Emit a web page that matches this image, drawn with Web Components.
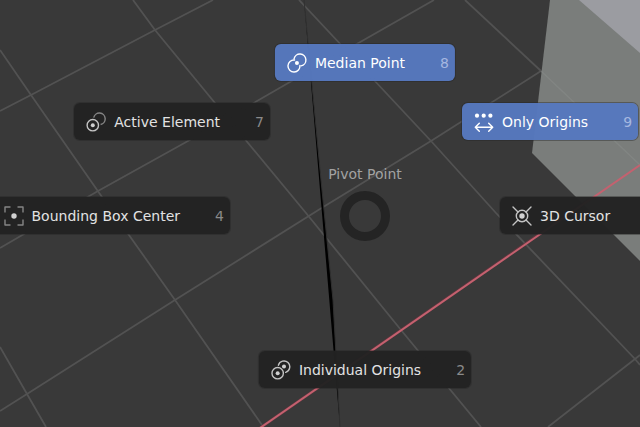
<!DOCTYPE html>
<html lang="en">
<head>
<meta charset="utf-8">
<title>Pivot Point</title>
<style>
html, body {
  margin: 0;
  height: 100%;
  overflow: hidden;
  background: #393939;
}
body { font: 14px/20px "DejaVu Sans", sans-serif; }
</style>
</head>
<body>
<view-port>
  <pie-menu heading="Pivot Point">
    <pie-item slot="w" icon="bounds" key="4">Bounding Box Center</pie-item>
    <pie-item slot="e" icon="cursor">3D Cursor</pie-item>
    <pie-item slot="s" icon="individual" key="2">Individual Origins</pie-item>
    <pie-item slot="n" icon="median" key="8" active>Median Point</pie-item>
    <pie-item slot="nw" icon="element" key="7">Active Element</pie-item>
    <pie-item slot="ne" icon="origins" key="9" active>Only Origins</pie-item>
  </pie-menu>
</view-port>

<script>
const ICONS = {
  median: `
    <path d="M7.1 5.8A6 6 0 1 1 14.2 12.9"/>
    <path d="M7.6 7A6 6 0 1 0 13 12.4"/>
    <circle class="dot" cx="10" cy="10" r="2"/>`,
  element: `
    <path class="dim" d="M7.7 5.6A5.8 5.8 0 1 1 14.6 12.5"/>
    <circle cx="6.8" cy="13.2" r="5.7"/>
    <circle class="dot" cx="6.8" cy="13.2" r="2"/>`,
  individual: `
    <path d="M7.5 5.2A5.8 5.8 0 1 1 14.8 12.3"/>
    <circle cx="6.8" cy="13.2" r="5.7"/>
    <circle class="dot" cx="6.8" cy="13.2" r="2"/>
    <circle class="dot" cx="13.1" cy="6.4" r="2"/>`,
  bounds: `
    <path class="dim" d="M1 6.5V1h5.500M13.500 1H19v5.500M19 13.500V19h-5.500M6.500 19H1v-5.500"/>
    <circle class="dot" cx="10" cy="10" r="2.700"/>`,
  origins: `
    <circle class="dot" cx="3" cy="3.700" r="2.100"/>
    <circle class="dot" cx="9.700" cy="3.700" r="2.100"/>
    <circle class="dot" cx="16.400" cy="3.700" r="2.100"/>
    <path d="M1.300 15.300h17.400M5.300 11.300l-4 4 4 4M14.700 11.300l4 4-4 4"/>`,
  cursor: `
    <circle cx="10" cy="10" r="5.700"/>
    <circle class="dot" cx="10" cy="10" r="2.700"/>
    <path d="M1 1l5 5M19 1l-5 5M1 19l5-5M19 19l-5-5"/>`,
};

const viewTpl = document.createElement('template');
viewTpl.innerHTML = `
<style>
:host {
  display: block;
  position: relative;
  height: 100%;
  overflow: hidden;
}
.scene {
  display: block;
  width: 100%;
  height: 100%;
}
.grid { fill: none; stroke: #525252; stroke-width: 1.8; }
.faint { fill: none; stroke: #8a8d8b; stroke-width: 1.5; opacity: .5; }
.seam { stroke: #313131; stroke-width: 1; }
.side { fill: #7a7d7b; }
.top { fill: #9b9ca1; }
.axis-edge { stroke: #713540; stroke-width: 3; opacity: .6; }
.axis { stroke: #c4616f; stroke-width: 2; }
</style>
<svg class="scene" viewBox="0 0 640 427" preserveAspectRatio="xMidYMid slice" aria-hidden="true">
  <g class="grid">
    <path d="M0 347L27 394L46 427"/>
    <path d="M0 50L31 95L102 197L175 300L262 425"/>
    <path d="M133 0L155 30L215 103L306 213L401 330L481 427"/>
    <path d="M299 0L431 141L496 213L635 359L640 365"/>
    <path d="M465 0L541 71"/>
    <path d="M0 111L31 95L155 30L213 0"/>
    <path d="M0 248L98 191L188 141L290 82L434 0"/>
    <path d="M0 411L27 394L175 300L320 209L431 141L541 71"/>
    <path d="M548 427L635 359L640 355"/>
  </g>
  <path class="seam" d="M304 0L321 180L333 300L340 427"/>
  <path class="side" d="M550 0H640V261L532 153Z"/>
  <path class="top" d="M579 0H640V53Z"/>
  <path class="faint" d="M541 71L640 165"/>
  <path class="axis-edge" d="M260 428L590 199"/>
  <path class="axis" d="M260 428L640 165"/>
</svg>
<slot></slot>
`;

class ViewPort extends HTMLElement {
  constructor() {
    super();
    this.attachShadow({ mode: 'open' });
    this.shadowRoot.appendChild(viewTpl.content.cloneNode(true));
  }
}

const menuTpl = document.createElement('template');
menuTpl.innerHTML = `
<style>
/* zero-size anchor where the menu was opened; entries fan out round it */
:host {
  position: absolute;
  left: 365px;
  top: 216px;
  width: 0;
  height: 0;
}
.ring {
  position: absolute;
  left: -25px;
  top: -25px;
  width: 50px;
  height: 50px;
  box-sizing: border-box;
  border: 9px solid #242424;
  border-radius: 50%;
}
.heading {
  position: absolute;
  top: -52px;
  left: 0;
  transform: translateX(-50%);
  white-space: nowrap;
  color: #a2a2a2;
}
::slotted(pie-item) { position: absolute; }
slot[name="n"]::slotted(*) { top: -172px; left: 0; transform: translateX(-50%); }
slot[name="s"]::slotted(*) { top: 135px; left: 0; transform: translateX(-50%); }
slot[name="nw"]::slotted(*) { top: -113px; right: 95px; }
slot[name="ne"]::slotted(*) { top: -113px; left: 97px; }
slot[name="w"]::slotted(*) { top: -19px; right: 135px; }
slot[name="e"]::slotted(*) { top: -19px; left: 135px; }
</style>
<div class="ring"></div>
<div class="heading"></div>
<slot name="n"></slot>
<slot name="nw"></slot>
<slot name="ne"></slot>
<slot name="w"></slot>
<slot name="e"></slot>
<slot name="s"></slot>
`;

class PieMenu extends HTMLElement {
  constructor() {
    super();
    this.attachShadow({ mode: 'open' });
    this.shadowRoot.appendChild(menuTpl.content.cloneNode(true));
  }

  connectedCallback() {
    const heading = this.getAttribute('heading') || '';
    this.setAttribute('role', 'group');
    this.setAttribute('aria-label', heading);
    this.shadowRoot.querySelector('.heading').textContent = heading;
  }
}

const itemTpl = document.createElement('template');
itemTpl.innerHTML = `
<style>
:host { display: block; }

button {
  display: flex;
  align-items: center;
  height: 37px;
  margin: 0;
  padding: 0 6px 0 12px;
  border: 0;
  border-radius: 6px;
  background: rgba(34, 34, 34, .97);
  box-shadow: 0 0 0 1px rgba(34, 34, 34, .4);
  color: #e2e2e2;
  font: inherit;
  white-space: nowrap;
  cursor: pointer;
}
button:hover { background: #2c2c2c; }
svg {
  flex: none;
  width: 20px;
  height: 20px;
  margin-right: 8px;
  fill: none;
  stroke: #c4c4c4;
  stroke-width: 1.4;
  stroke-linecap: round;
  stroke-linejoin: round;
}
.dot { fill: #d0d0d0; stroke: none; }
.dim { stroke: #858585; stroke-linecap: butt; }
.key {
  min-width: 9px;
  margin-left: 35px;
  color: #8a8a8a;
}

:host([active]) button {
  background: rgba(86, 120, 190, .97);
  color: #fff;
}
:host([active]) svg { stroke: #fff; }
:host([active]) .dot { fill: #fff; }
:host([active]) .key { color: #a5b7e0; }
</style>
<button type="button">
  <svg viewBox="0 0 20 20" aria-hidden="true"></svg>
  <slot></slot>
  <span class="key"></span>
</button>
`;

class PieItem extends HTMLElement {
  static get observedAttributes() { return ['active']; }

  constructor() {
    super();
    this.attachShadow({ mode: 'open' });
    this.shadowRoot.appendChild(itemTpl.content.cloneNode(true));
    this._button = this.shadowRoot.querySelector('button');
    this._button.addEventListener('click', () => this.toggleAttribute('active'));
  }

  connectedCallback() {
    this.shadowRoot.querySelector('svg').innerHTML = ICONS[this.getAttribute('icon')] || '';
    this.shadowRoot.querySelector('.key').textContent = this.getAttribute('key') || '';
    this._sync();
  }

  attributeChangedCallback() {
    this._sync();
  }

  _sync() {
    this._button.setAttribute('aria-pressed', String(this.hasAttribute('active')));
  }
}

customElements.define('view-port', ViewPort);
customElements.define('pie-menu', PieMenu);
customElements.define('pie-item', PieItem);
</script>
</body>
</html>
